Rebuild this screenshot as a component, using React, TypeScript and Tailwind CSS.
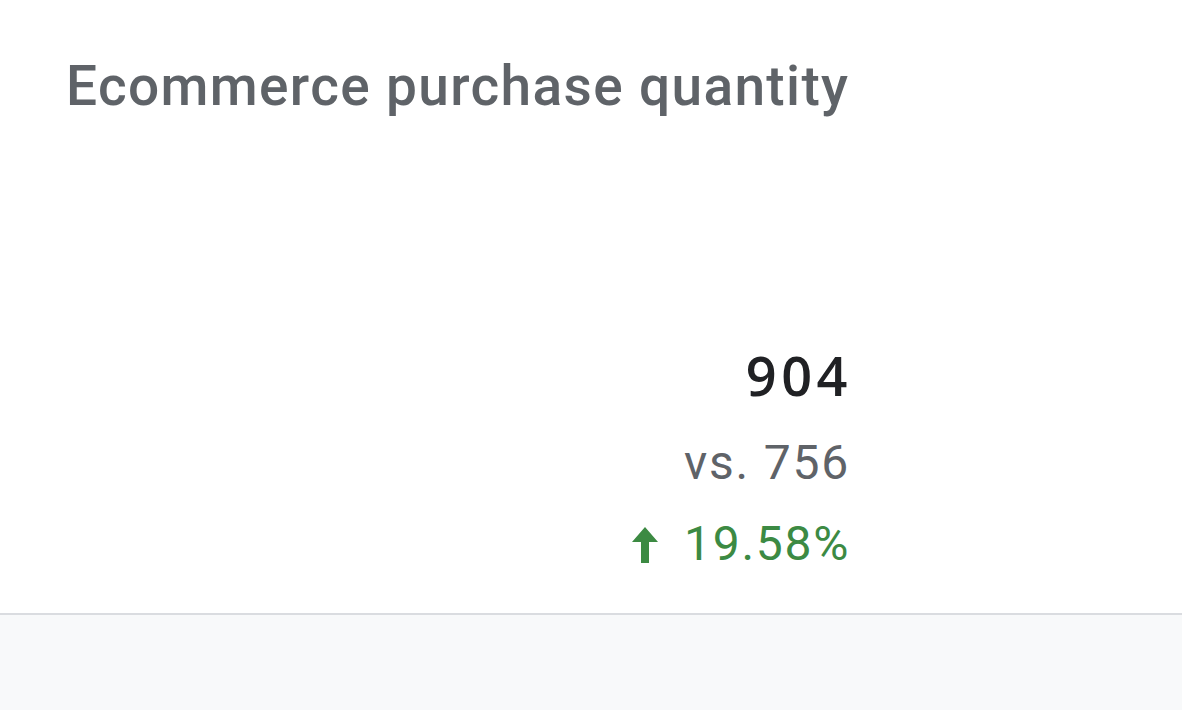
export default function App() {
  return (
    <div className="min-h-[710px] w-full bg-[#f8f9fa]" style={{ fontFamily: 'Roboto, "Liberation Sans", sans-serif' }}>
      <div className="h-[615px] border-b-2 border-[#dadce0] bg-white">
        <div className="w-[848px] pl-[66px] pt-[51px]">
          <h1 className="whitespace-nowrap text-[55px] font-medium leading-[70px] tracking-[1.35px] text-[#5f6368]">
            Ecommerce purchase quantity
          </h1>
          <div className="mt-[224px] flex flex-col items-end whitespace-nowrap">
            <div
              className="mr-[-4px] text-[54px] font-semibold leading-[60px] tracking-[4.5px] text-[#202124]"
              style={{ fontFamily: '"Open Sans", Roboto, sans-serif' }}
            >
              904
            </div>
            <div className="mt-[30px] mr-[-2px] text-[48px] leading-[56px] tracking-[1.8px] text-[#5f6368]">vs. 756</div>
            <div className="mt-[25px] mr-[-2px] flex items-center gap-[26px] text-[48px] leading-[56px] tracking-[1.7px] text-[#3c8a43]">
              <svg width="26" height="36" viewBox="0 0 26 36" className="mt-[2px]">
                <path d="M13 0 L26 15 L17 15 L17 36 L9 36 L9 15 L0 15 Z" fill="#3c8a43" />
              </svg>
              <span>19.58%</span>
            </div>
          </div>
        </div>
      </div>
    </div>
  );
}
